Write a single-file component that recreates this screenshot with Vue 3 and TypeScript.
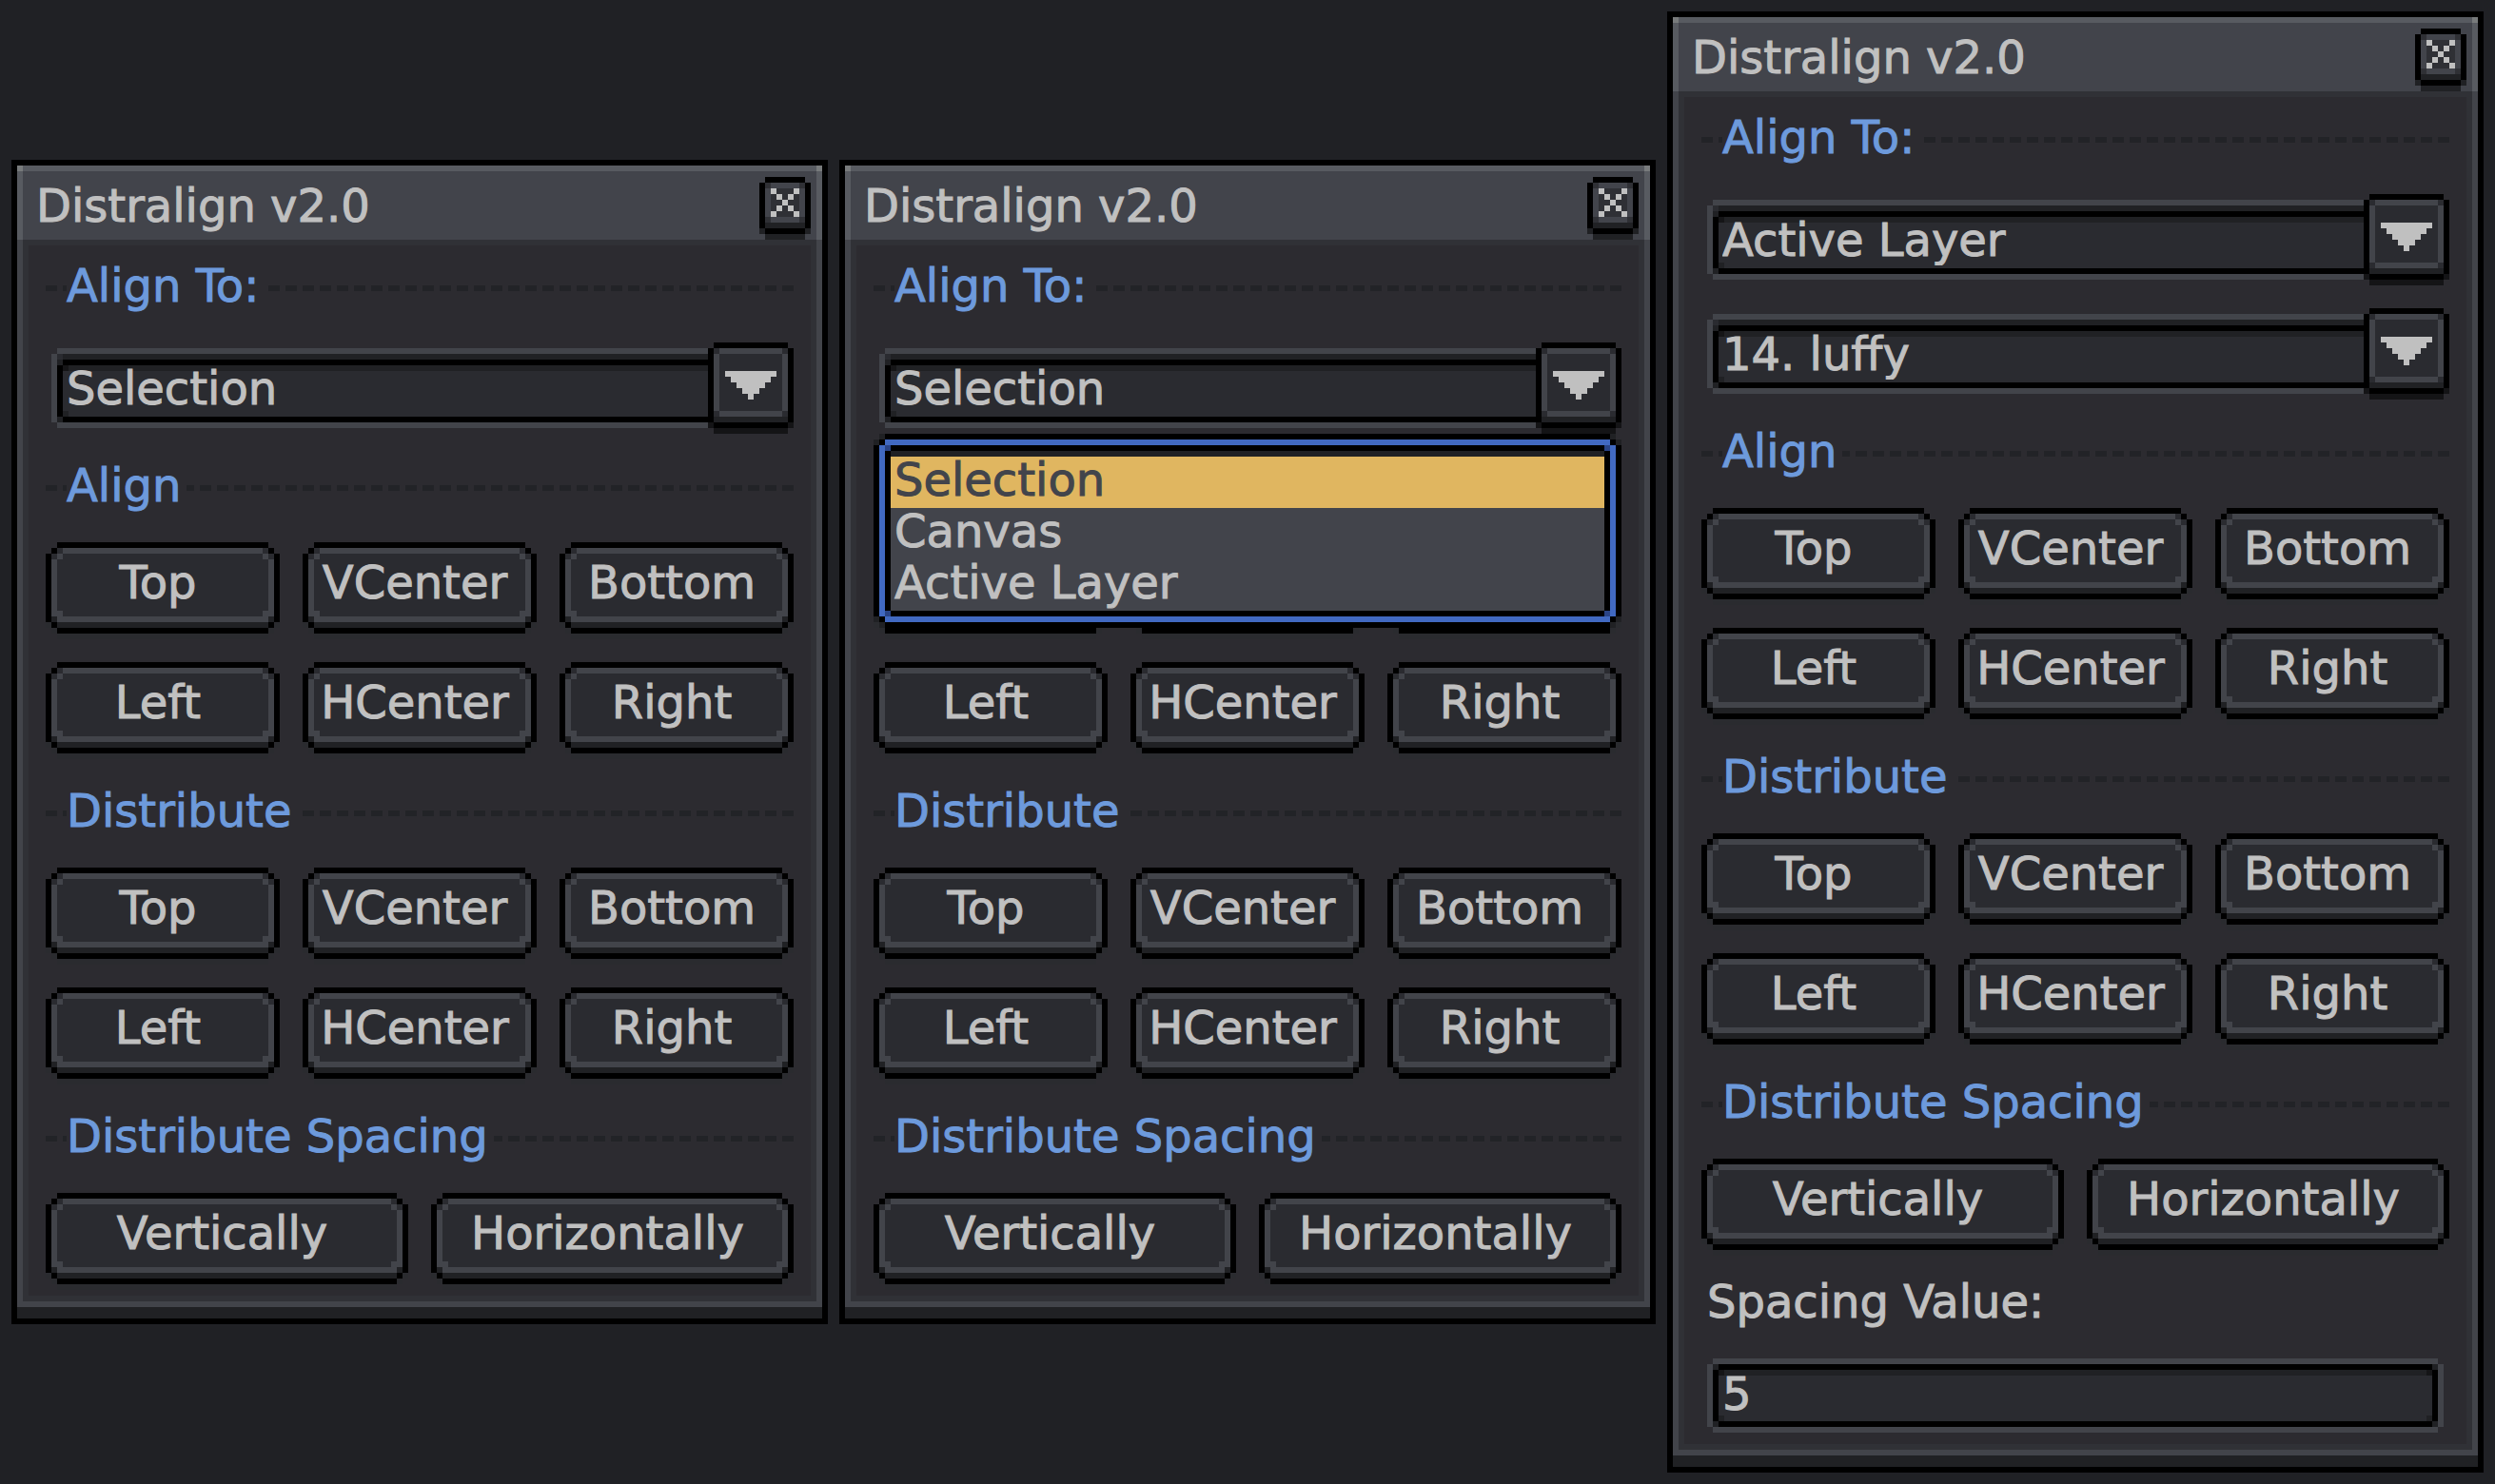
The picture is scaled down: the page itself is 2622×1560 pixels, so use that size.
<script setup lang="ts">
import { ref } from 'vue'

interface Dropdown {
  label: string
  value: string
  options: string[]
  open: boolean
}

interface Section {
  title: string
  rows: string[][]
}

interface Dialog {
  id: string
  dropdowns: Dropdown[]
  spacing: string | null
}

const targets = ['Selection', 'Canvas', 'Active Layer']

const sections: Section[] = [
  { title: 'Align', rows: [['Top', 'VCenter', 'Bottom'], ['Left', 'HCenter', 'Right']] },
  { title: 'Distribute', rows: [['Top', 'VCenter', 'Bottom'], ['Left', 'HCenter', 'Right']] },
  { title: 'Distribute Spacing', rows: [['Vertically', 'Horizontally']] },
]

const dialogs = ref<Dialog[]>([
  {
    id: 'closed',
    dropdowns: [{ label: 'Align to', value: 'Selection', options: targets, open: false }],
    spacing: null,
  },
  {
    id: 'open',
    dropdowns: [{ label: 'Align to', value: 'Selection', options: targets, open: true }],
    spacing: null,
  },
  {
    id: 'layer',
    dropdowns: [
      { label: 'Align to', value: 'Active Layer', options: targets, open: false },
      { label: 'Layer', value: '14. luffy', options: ['14. luffy'], open: false },
    ],
    spacing: '5',
  },
])

function pick(dropdown: Dropdown, option: string) {
  dropdown.value = option
  dropdown.open = false
}
</script>

<template>
  <main class="desk">
    <section v-for="dialog in dialogs" :key="dialog.id" class="dialog" :aria-labelledby="`title-${dialog.id}`">
      <header class="titlebar">
        <h1 :id="`title-${dialog.id}`" class="title">Distralign v2.0</h1>
        <button class="close" type="button" aria-label="Close">
          <svg viewBox="0 0 9 11" shape-rendering="crispEdges" aria-hidden="true">
            <path fill="#202124" d="M0 9h9v1H0zM1 8h7v3H1z" />
            <path fill="#000000" d="M1 0h7v1H1zM0 1h1v8H0zM8 1h1v8H8zM1 9h7v1H1z" />
            <path fill="#2f3035" d="M1 1h7v7H1z" />
            <path fill="#42444b" d="M2 1h5v1H2zM1 2h1v5H1zM7 2h1v5H7zM2 7h5v1H2z" />
            <path
              fill="#c0c0c0"
              d="M2 2h1v1H2zM6 2h1v1H6zM3 3h1v1H3zM5 3h1v1H5zM4 4h1v1H4zM3 5h1v1H3zM5 5h1v1H5zM2 6h1v1H2zM6 6h1v1H6z"
            />
          </svg>
        </button>
      </header>

      <div class="body">
        <h2 class="heading"><span>Align To:</span></h2>

        <div v-for="dropdown in dialog.dropdowns" :key="dropdown.label" class="combo">
          <select v-model="dropdown.value" class="combo-field" :aria-label="dropdown.label">
            <option v-for="option in dropdown.options" :key="option">{{ option }}</option>
          </select>
          <button
            class="combo-arrow"
            type="button"
            aria-label="Show options"
            :aria-expanded="dropdown.open"
            @click="dropdown.open = !dropdown.open"
          >
            <svg viewBox="0 0 15 16" shape-rendering="crispEdges" aria-hidden="true">
              <path fill="#141416" d="M0 14h15v1H0zM1 15h13v1H1z" />
              <path fill="#000000" d="M1 0h13v1H1zM0 1h1v13H0zM14 1h1v13h-1zM1 14h13v1H1z" />
              <path fill="#2a2b30" d="M1 1h13v12H1z" />
              <path fill="#202124" d="M1 13h13v1H1z" />
              <path fill="#42444a" d="M2 1h11v1H2zM1 2h1v10H1zM13 2h1v10h-1zM2 12h11v1H2z" />
              <path fill="#c0c0c0" d="M3 5h9v1H3zM4 6h7v1H4zM5 7h5v1H5zM6 8h3v1H6zM7 9h1v1H7z" />
            </svg>
          </button>
          <ul v-if="dropdown.open" class="popup" role="listbox" :aria-label="dropdown.label">
            <li
              v-for="option in dropdown.options"
              :key="option"
              class="option"
              :class="{ selected: option === dropdown.value }"
              role="option"
              :aria-selected="option === dropdown.value"
              @click="pick(dropdown, option)"
            >
              {{ option }}
            </li>
          </ul>
        </div>

        <template v-for="section in sections" :key="section.title">
          <h2 class="heading"><span>{{ section.title }}</span></h2>
          <div v-for="(row, index) in section.rows" :key="index" class="row">
            <button v-for="name in row" :key="name" class="action" type="button">{{ name }}</button>
          </div>
        </template>

        <div v-if="dialog.spacing !== null" class="entry">
          <label class="entry-label" :for="`spacing-${dialog.id}`">Spacing Value:</label>
          <input :id="`spacing-${dialog.id}`" v-model="dialog.spacing" class="entry-field" type="text" />
        </div>
      </div>
    </section>
  </main>
</template>

<style>
body {
  margin: 0;
  background: #202125;
}
</style>

<style scoped>
.desk {
  box-sizing: border-box;
  display: flex;
  align-items: center;
  gap: 12px;
  min-height: 100vh;
  padding: 12px;
  color: #c0c0c0;
  font: 48px/54px "DejaVu Sans", sans-serif;
  -webkit-text-stroke: 1px currentColor;
}

.desk *,
.desk *::before,
.desk *::after {
  box-sizing: border-box;
}

.dialog {
  flex: 1;
  min-width: 0;
  padding-bottom: 12px;
  border: 6px solid #000000;
  background: #202124;
}

.titlebar {
  position: relative;
  display: flex;
  align-items: flex-end;
  justify-content: space-between;
  padding: 0 6px 0 14px;
  border: 6px solid #585b61;
  border-bottom: 0;
  background: #42444b;
}

.titlebar::before,
.titlebar::after {
  content: "";
  position: absolute;
  top: -6px;
  width: 6px;
  height: 6px;
  background: #787b7c;
}

.titlebar::before {
  left: -6px;
}

.titlebar::after {
  right: -6px;
}

.title {
  margin: 0;
  font: inherit;
  line-height: 72px;
}

button,
select,
input {
  margin: 0;
  border-radius: 0;
  color: inherit;
  font: inherit;
  -webkit-text-stroke: inherit;
  appearance: none;
}

.close,
.combo-arrow {
  flex: none;
  padding: 0;
  border: 0;
  background: none;
}

.close {
  width: 54px;
  height: 66px;
}

.close svg,
.combo-arrow svg {
  display: block;
  width: 100%;
  height: 100%;
}

.body {
  display: flex;
  flex-direction: column;
  gap: 24px;
  padding: 18px 24px 12px;
  border: 6px solid #42444a;
  border-top: 0;
  background: #2c2b30;
  box-shadow: inset 0 0 0 6px #303136;
}

.heading {
  height: 66px;
  margin: 0;
  padding-left: 22px;
  background: repeating-linear-gradient(90deg, #222327 0 12px, transparent 12px 18px) 0 30px / 100% 6px no-repeat;
  color: #6d9adc;
  font: inherit;
  line-height: 60px;
}

.heading span {
  display: inline-block;
  padding-right: 6px;
  background: #2c2b30;
}

.combo {
  position: relative;
  display: flex;
  height: 96px;
  padding-left: 6px;
}

.combo-field {
  flex: 1;
  min-width: 0;
  height: 84px;
  margin-top: 6px;
  padding: 0 10px;
  border: 6px solid transparent;
  border-right: 0;
  outline: 0;
  background: none;
  border-image: url("data:image/svg+xml,<svg xmlns='http://www.w3.org/2000/svg' width='24' height='48' viewBox='0 0 4 8' shape-rendering='crispEdges'><path fill='%232a2b30' d='M1 1h3v6H1z'/><path fill='%2342444a' d='M1 0h3v1H1zM0 1h1v6H0zM1 7h3v1H1z'/><path fill='%23202124' d='M2 1h2v1H2zM1 2h1v1H1zM3 3h1v1H3zM2 5h1v1H2zM1 6h1v1H1z'/><path d='M2 2h2v1H2zM1 3h1v3H1zM2 6h2v1H2z'/><path fill='%23151517' d='M2 3h1v1H2z'/></svg>") 24 0 18 18 fill / 24px 0 18px 18px stretch;
}

.combo-arrow {
  width: 90px;
  height: 96px;
}

.popup {
  position: absolute;
  z-index: 1;
  top: 100%;
  left: 0;
  right: 0;
  margin: 0;
  padding: 0;
  border: 18px solid transparent;
  border-top-width: 24px;
  list-style: none;
  border-image: url("data:image/svg+xml,<svg xmlns='http://www.w3.org/2000/svg' width='42' height='48' viewBox='0 0 7 8' shape-rendering='crispEdges'><path fill='%23202124' d='M1 0h5v8H1zM0 1h7v6H0z'/><path d='M2 0h3v8H2zM1 1h5v6H1zM0 2h7v4H0z'/><path fill='%234169c1' d='M2 1h3v1H2zM1 2h1v4H1zM5 2h1v4H5zM2 6h3v1H2z'/><path fill='%232a4486' d='M2 2h1v1H2zM4 2h1v1H4zM2 5h1v1H2zM4 5h1v1H4z'/><path fill='%23202124' d='M3 3h1v1H3z'/></svg>") 24 18 18 18 stretch;
}

.option {
  height: 54px;
  padding-left: 4px;
  background: #42444b;
  line-height: 48px;
}

.option.selected {
  background: #e0b660;
  color: #42444b;
}

.row {
  display: flex;
  gap: 24px;
}

.action {
  flex: 1;
  min-width: 0;
  height: 102px;
  padding: 0 10px 18px 0;
  border: 6px solid transparent;
  background: none;
  white-space: nowrap;
  border-image: url("data:image/svg+xml,<svg xmlns='http://www.w3.org/2000/svg' width='42' height='54' viewBox='0 0 7 9' shape-rendering='crispEdges'><path fill='%232a2b2f' d='M0 6h7v1H0zM1 7h5v1H1zM2 8h3v1H2z'/><path d='M2 0h3v1H2zM1 1h5v1H1zM0 2h7v4H0zM1 6h5v1H1zM2 7h3v1H2z'/><path fill='%232a2b30' d='M2 1h3v1H2zM1 2h5v3H1z'/><path fill='%23202124' d='M1 5h5v1H1zM2 6h3v1H2z'/><path fill='%2342444a' d='M3 1h1v1H3zM2 2h1v1H2zM4 2h1v1H4zM1 3h1v2H1zM5 3h1v2H5zM2 4h1v1H2zM4 4h1v1H4zM2 5h3v1H2z'/></svg>") 18 18 30 18 fill / 18px 18px 30px 18px stretch;
}

.entry {
  display: flex;
  flex-direction: column;
  gap: 24px;
  padding: 0 6px 6px;
}

.entry-label {
  height: 60px;
  line-height: 48px;
}

.entry-field {
  width: 100%;
  height: 78px;
  padding: 0 10px 4px;
  border: 6px solid transparent;
  outline: 0;
  background: none;
  border-image: url("data:image/svg+xml,<svg xmlns='http://www.w3.org/2000/svg' width='42' height='42' viewBox='0 0 7 7' shape-rendering='crispEdges'><path fill='%232a2b30' d='M1 1h5v5H1z'/><path fill='%2342444a' d='M1 0h5v1H1zM0 1h1v5H0zM6 1h1v5H6zM1 6h5v1H1z'/><path fill='%23202124' d='M1 1h1v1H1zM5 1h1v1H5zM3 2h1v1H3zM2 4h1v1H2zM4 4h1v1H4zM1 5h1v1H1zM5 5h1v1H5z'/><path d='M2 1h3v1H2zM1 2h1v3H1zM5 2h1v3H5zM2 5h3v1H2z'/><path fill='%23151517' d='M2 2h1v1H2zM4 2h1v1H4z'/></svg>") 18 fill / 18px stretch;
}
</style>
